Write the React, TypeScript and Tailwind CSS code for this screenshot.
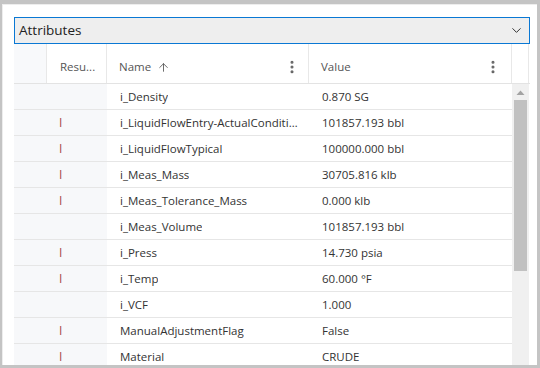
import { ChevronDown, ArrowUp, EllipsisVertical } from "lucide-react";

const rows = [
  { flag: false, name: "i_Density", value: "0.870 SG" },
  { flag: true, name: "i_LiquidFlowEntry-ActualConditions", value: "101857.193 bbl" },
  { flag: true, name: "i_LiquidFlowTypical", value: "100000.000 bbl" },
  { flag: true, name: "i_Meas_Mass", value: "30705.816 klb" },
  { flag: true, name: "i_Meas_Tolerance_Mass", value: "0.000 klb" },
  { flag: false, name: "i_Meas_Volume", value: "101857.193 bbl" },
  { flag: true, name: "i_Press", value: "14.730 psia" },
  { flag: true, name: "i_Temp", value: "60.000 °F" },
  { flag: false, name: "i_VCF", value: "1.000" },
  { flag: true, name: "ManualAdjustmentFlag", value: "False" },
  { flag: true, name: "Material", value: "CRUDE" },
];

export default function App() {
  return (
    <div className="w-[540px] h-[368px] bg-[#c4c4c4] pl-[2px] pt-[4px] pr-[3px] pb-[3px] font-['Segoe_UI','Open_Sans',sans-serif]">
      <div className="h-full bg-white border-l border-t border-[#ededed] pl-[11px] pt-[12px] pr-[7px] overflow-hidden">
        {/* Dropdown */}
        <div className="h-[27px] border border-[#0a78d4] bg-[#eeeeee] flex items-center justify-between pl-[4px] pr-[5px] text-[13.5px] text-[#222]">
          <span>Attributes</span>
          <ChevronDown size={15} strokeWidth={1.6} className="text-[#333]" />
        </div>

        {/* Header */}
        <div className="flex h-[40px] border-b border-[#e3e3e3] text-[11.5px] text-[#555]">
          <div className="w-[33px] bg-[#f8f9fb] border-r border-[#e8e8e8]" />
          <div className="w-[60px] border-r border-[#e8e8e8] flex items-center pt-[7px] pl-[13px]">Resu...</div>
          <div className="w-[202px] border-r border-[#e8e8e8] flex items-center pt-[7px] pl-[12px] pr-[8px]">
            <span>Name</span>
            <ArrowUp size={13} strokeWidth={1.6} className="ml-[6px] text-[#555]" />
            <EllipsisVertical size={16} strokeWidth={2.6} className="ml-auto text-[#666]" />
          </div>
          <div className="w-[203px] border-r border-[#e8e8e8] flex items-center pt-[7px] pl-[12px] pr-[10px]">
            <span>Value</span>
            <EllipsisVertical size={16} strokeWidth={2.6} className="ml-auto text-[#666]" />
          </div>
          <div className="w-[17px] border-r border-[#e8e8e8]" />
        </div>

        {/* Body */}
        <div className="flex">
          <div className="w-[498px]">
            {rows.map((r) => (
              <div key={r.name} className="flex h-[26px] border-b border-[#e6e6e6] text-[11.5px] text-[#333]">
                <div className="w-[93px] bg-[#f7f8fa] flex items-center pl-[45px] text-[12px] text-[#a84848]">
                  {r.flag ? "I" : ""}
                </div>
                <div className="w-[202px] flex items-center pl-[13px] pr-[10px] min-w-0">
                  <span className="truncate">{r.name}</span>
                </div>
                <div className="w-[203px] flex items-center pl-[13px]">{r.value}</div>
              </div>
            ))}
          </div>
          <div className="w-[17px] h-[290px] bg-[#f0f0f0] flex flex-col items-center">
            <svg width="9" height="6" viewBox="0 0 9 6" className="mt-[6px]">
              <polygon points="4.5,0.5 8.5,5 0.5,5" fill="#a3a3a3" />
            </svg>
            <div className="w-[13px] h-[171px] bg-[#c1c1c1] mt-[4px]" />
          </div>
        </div>
      </div>
    </div>
  );
}
